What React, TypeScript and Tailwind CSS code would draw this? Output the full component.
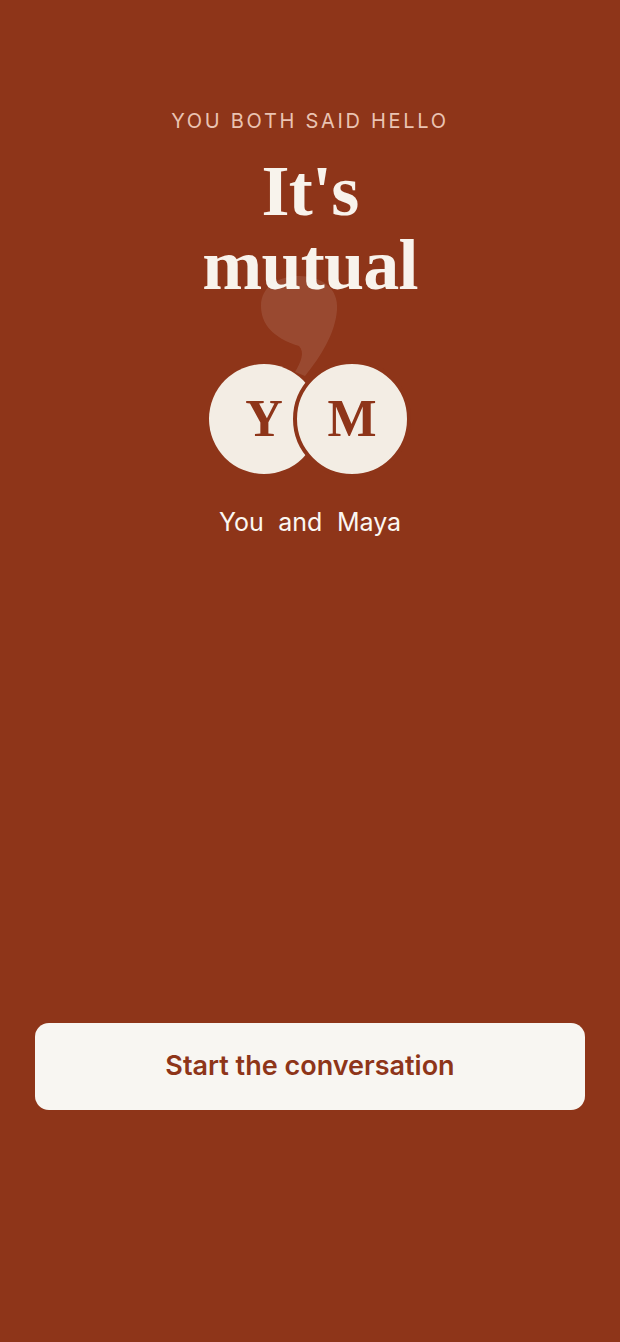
export default function App() {
  return (
    <div className="min-h-[1342px] w-full bg-[#8e3519] flex flex-col items-center font-['Inter',sans-serif]">
      {/* Header copy */}
      <p className="mt-[108px] text-[20px] leading-[26px] tracking-[0.135em] text-[#eac3b2]">
        YOU BOTH SAID HELLO
      </p>
      <h1 className="mt-[20px] text-center font-['Liberation_Serif',serif] font-bold text-[72px] leading-[74px] text-[#f8f3ec] tracking-[-0.01em]">
        It's
        <br />
        mutual
      </h1>

      {/* Avatars with decorative comma behind */}
      <div className="relative mt-[58px] flex items-center">
        <svg
          className="absolute left-[50px] top-[-84px] w-[80px] h-[100px]"
          viewBox="0 0 80 100"
        >
          <path
            d="M40 0 C62 0 80 12 78 34 C76 58 62 80 46 100 L36 96 C42 86 46 76 40 70 C14 62 2 48 2 30 C2 10 20 0 40 0 Z"
            fill="#ffffff"
            fillOpacity="0.1"
          />
        </svg>
        <div className="relative z-10 w-[110px] h-[110px] rounded-full bg-[#f3ede4] flex items-center justify-center">
          <span className="font-['Liberation_Serif',serif] font-bold text-[52px] leading-none text-[#8e3519]">
            Y
          </span>
        </div>
        <div className="relative z-20 -ml-[26px] w-[118px] h-[118px] rounded-full bg-[#f3ede4] border-[4px] border-[#8e3519] flex items-center justify-center">
          <span className="font-['Liberation_Serif',serif] font-bold text-[52px] leading-none text-[#8e3519]">
            M
          </span>
        </div>
      </div>

      <p className="mt-[29px] text-[25px] leading-[30px] text-[#fbf7f2] [word-spacing:0.3em]">
        You and Maya
      </p>

      <div className="flex-1" />

      <div className="w-full px-[35px] mt-[486px]">
        <button className="w-full h-[87px] rounded-[14px] bg-[#f8f6f2] text-[#8e3519] text-[27px] font-semibold">
          Start the conversation
        </button>
      </div>
      <div className="h-[232px]" />
    </div>
  )
}
